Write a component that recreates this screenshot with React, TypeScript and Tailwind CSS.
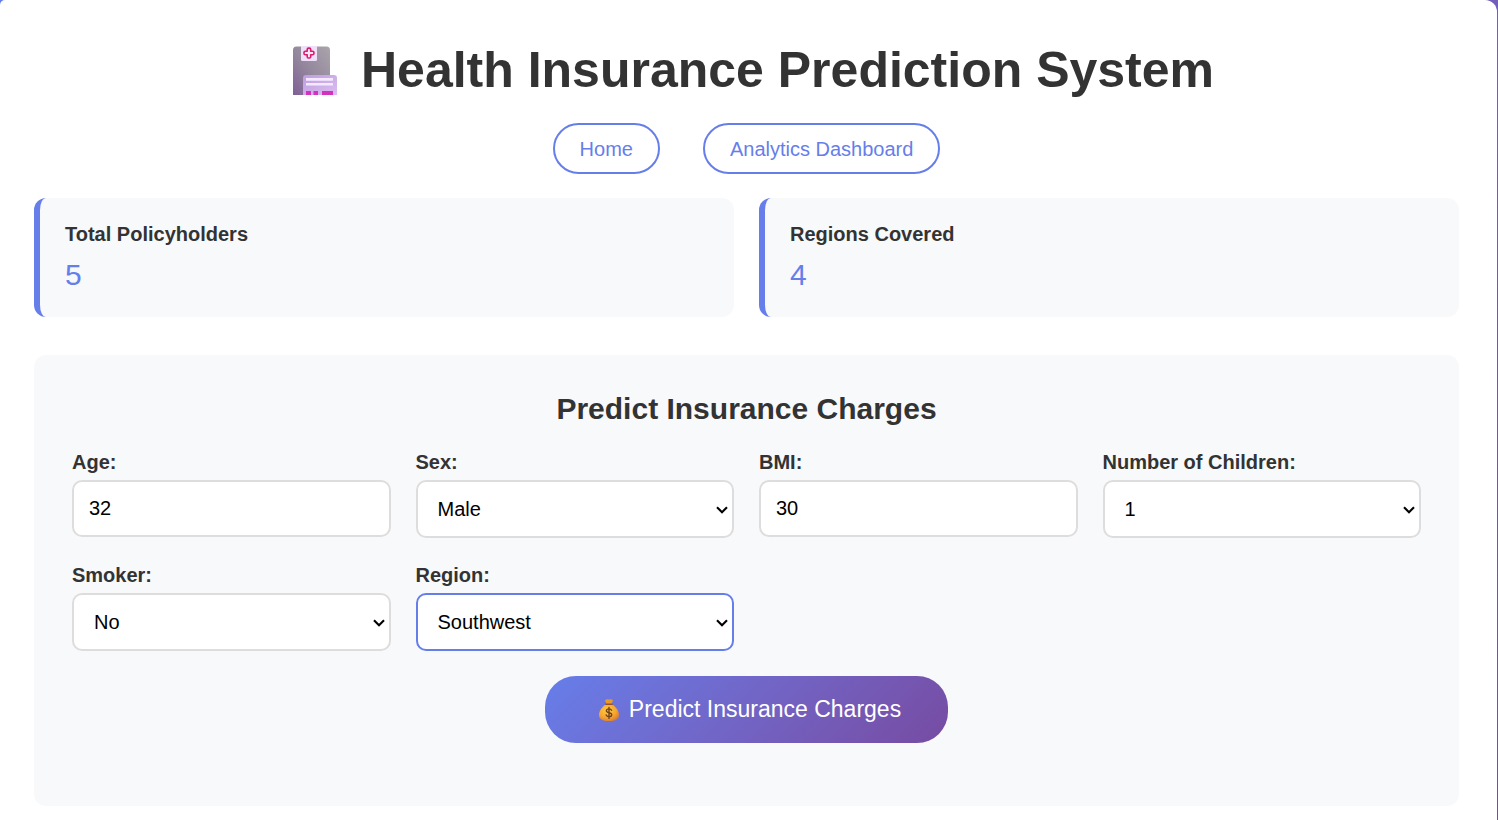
import { useState } from "react";
import type { ReactNode } from "react";

function HospitalIcon() {
  return (
    <svg viewBox="0 0 44 49" className="h-[49px] w-11 shrink-0" aria-hidden="true">
      <defs>
        <linearGradient id="tower" x1="0" y1="1" x2="1" y2="0">
          <stop offset="0" stopColor="#7f5f98" />
          <stop offset="0.45" stopColor="#93869c" />
          <stop offset="1" stopColor="#aaa5ac" />
        </linearGradient>
        <linearGradient id="wing" x1="0" y1="0" x2="1" y2="1">
          <stop offset="0" stopColor="#bd9fdf" />
          <stop offset="1" stopColor="#dcbcf2" />
        </linearGradient>
      </defs>
      <path d="M0 49V4a3.500 3.500 0 0 1 3.500-3.500h30a3.500 3.500 0 0 1 3.500 3.500v45Z" fill="url(#tower)" />
      <rect x="8" y="-1" width="16" height="16" rx="1.5" fill="#eee0fa" />
      <path
        d="M14.200 3.400q0-1.300 1.300-1.300h.9q1.300 0 1.300 1.300v1.900h1.900q1.300 0 1.300 1.300v.9q0 1.300-1.300 1.300h-1.900v1.900q0 1.300-1.300 1.300h-.9q-1.300 0-1.300-1.300V8.800h-1.900q-1.300 0-1.300-1.300v-.9q0-1.300 1.300-1.300h1.900Z"
        fill="#f4e6fb"
        stroke="#dc1c68"
        strokeWidth="1.6"
        strokeLinejoin="round"
      />
      <path d="M10 49V32a3 3 0 0 1 3-3h28a3 3 0 0 1 3 3v17Z" fill="url(#wing)" />
      <path d="M13 33.4h27M13 38.3h27" stroke="#f4e9ff" strokeWidth="2.6" />
      <path d="M13 45h5v4h-5ZM20.5 45h4.5v4h-4.5ZM29 45h11v4H29Z" fill="#d431bd" />
    </svg>
  );
}

function MoneyBagIcon() {
  return (
    <svg viewBox="0 0 22 24" className="h-6 w-[22px] shrink-0" aria-hidden="true">
      <defs>
        <radialGradient id="bag" cx="0.4" cy="0.35" r="0.75">
          <stop offset="0" stopColor="#ffca42" />
          <stop offset="0.6" stopColor="#f5a52d" />
          <stop offset="1" stopColor="#d47535" />
        </radialGradient>
      </defs>
      <path d="M7 2.2Q9 .6 11 1.6 13 .6 15 2.2L13.5 6h-5Z" fill="#e99a2d" />
      <path d="M8 6.3h6c4 2.7 7 6.7 7 10.7 0 4.2-3.5 6-10 6s-10-1.8-10-6C1 13 4 9 8 6.3Z" fill="url(#bag)" />
      <path d="M7.8 6.2h6.4" stroke="#935037" strokeWidth="1.6" strokeLinecap="round" />
      <path
        d="M13.6 12.3c-.5-1-1.4-1.4-2.6-1.4-1.500 0-2.600.7-2.600 1.900 0 2.700 5.300 1.200 5.300 3.900 0 1.200-1.100 2-2.700 2-1.400 0-2.400-.6-2.800-1.700M11 9.400v11"
        fill="none"
        stroke="#70421f"
        strokeWidth="1.4"
        strokeLinecap="round"
      />
    </svg>
  );
}

function NavLink({ children, href }: { children: ReactNode; href: string }) {
  return (
    <a
      href={href}
      className="flex h-[51px] items-center rounded-full border-2 border-[#667eea] px-[25px] text-xl text-[#667eea]"
    >
      {children}
    </a>
  );
}

function StatCard({ title, value }: { title: string; value: number }) {
  return (
    <section className="rounded-xl border-l-6 border-[#667eea] bg-[#f8f9fb] px-[25px] pt-[22px] pb-6">
      <h3 className="text-xl leading-7 font-bold">{title}</h3>
      <p className="pt-2 text-[30px] leading-[37px] text-[#667eea]">{value}</p>
    </section>
  );
}

function Field({ id, label, children }: { id: string; label: string; children: ReactNode }) {
  return (
    <div className="flex flex-col gap-1">
      <label htmlFor={id} className="text-xl leading-7 font-bold">
        {label}
      </label>
      {children}
    </div>
  );
}

function NumberField({ id, label, initial }: { id: string; label: string; initial: string }) {
  const [value, setValue] = useState(initial);
  return (
    <Field id={id} label={label}>
      <input
        id={id}
        inputMode="decimal"
        value={value}
        onChange={(e) => setValue(e.target.value)}
        className="h-[57px] w-full rounded-[10px] border-2 border-[#dddddd] bg-white px-[15px] text-xl text-black outline-none focus:border-[#667eea]"
      />
    </Field>
  );
}

function SelectField({
  id,
  label,
  initial,
  options,
  active = false,
}: {
  id: string;
  label: string;
  initial: string;
  options: string[];
  active?: boolean;
}) {
  const [value, setValue] = useState(initial);
  return (
    <Field id={id} label={label}>
      <div className="relative">
        <select
          id={id}
          value={value}
          onChange={(e) => setValue(e.target.value)}
          className={`block h-[58px] w-full appearance-none rounded-[10px] border-2 bg-white px-5 text-xl text-black outline-none focus:border-[#667eea] ${
            active ? "border-[#667eea]" : "border-[#dddddd]"
          }`}
        >
          {options.map((o) => (
            <option key={o}>{o}</option>
          ))}
        </select>
        <svg
          viewBox="0 0 12 8"
          className="pointer-events-none absolute top-[26px] right-1.5 h-2 w-3"
          aria-hidden="true"
        >
          <path d="M1 1.200l5 5 5-5" fill="none" stroke="#000" strokeWidth="2.1" />
        </svg>
      </div>
    </Field>
  );
}

export default function App() {
  return (
    <div className="min-h-screen bg-linear-135 from-[#667eea] to-[#764ba2] pr-px font-['Liberation_Sans',Arial,sans-serif] text-[#333333]">
      <main className="min-h-screen rounded-tl-[5px] rounded-tr-xl bg-white pt-10 pr-[38px] pb-3.5 pl-[34px]">
        <h1 className="flex items-center justify-center gap-6 pl-3.5 text-[50px] leading-[60px] font-bold">
          <HospitalIcon />
          Health Insurance Prediction System
        </h1>
        <nav className="mt-[23px] flex justify-center gap-[43px]">
          <NavLink href="#home">Home</NavLink>
          <NavLink href="#analytics">Analytics Dashboard</NavLink>
        </nav>
        <div className="mt-6 grid grid-cols-2 gap-[25px]">
          <StatCard title="Total Policyholders" value={5} />
          <StatCard title="Regions Covered" value={4} />
        </div>
        <section className="mt-[38px] rounded-xl bg-[#f8f9fb] px-[38px] pt-9 pb-[63px]">
          <h2 className="text-center text-[30px] leading-9 font-bold">Predict Insurance Charges</h2>
          <form onSubmit={(e) => e.preventDefault()} className="mt-[21px]">
            <div className="grid grid-cols-4 gap-x-[25px] gap-y-[23px]">
              <NumberField id="age" label="Age:" initial="32" />
              <SelectField id="sex" label="Sex:" initial="Male" options={["Male", "Female"]} />
              <NumberField id="bmi" label="BMI:" initial="30" />
              <SelectField
                id="children"
                label="Number of Children:"
                initial="1"
                options={["0", "1", "2", "3", "4", "5"]}
              />
              <SelectField id="smoker" label="Smoker:" initial="No" options={["No", "Yes"]} />
              <SelectField
                id="region"
                label="Region:"
                initial="Southwest"
                options={["Northeast", "Northwest", "Southeast", "Southwest"]}
                active
              />
            </div>
            <button
              type="submit"
              className="mx-auto mt-[25px] flex h-[67px] items-center gap-[9px] rounded-[31px] bg-linear-135 from-[#667eea] to-[#764ba2] pr-[47px] pl-[53px] text-[23px] text-white"
            >
              <MoneyBagIcon />
              Predict Insurance Charges
            </button>
          </form>
        </section>
      </main>
    </div>
  );
}
